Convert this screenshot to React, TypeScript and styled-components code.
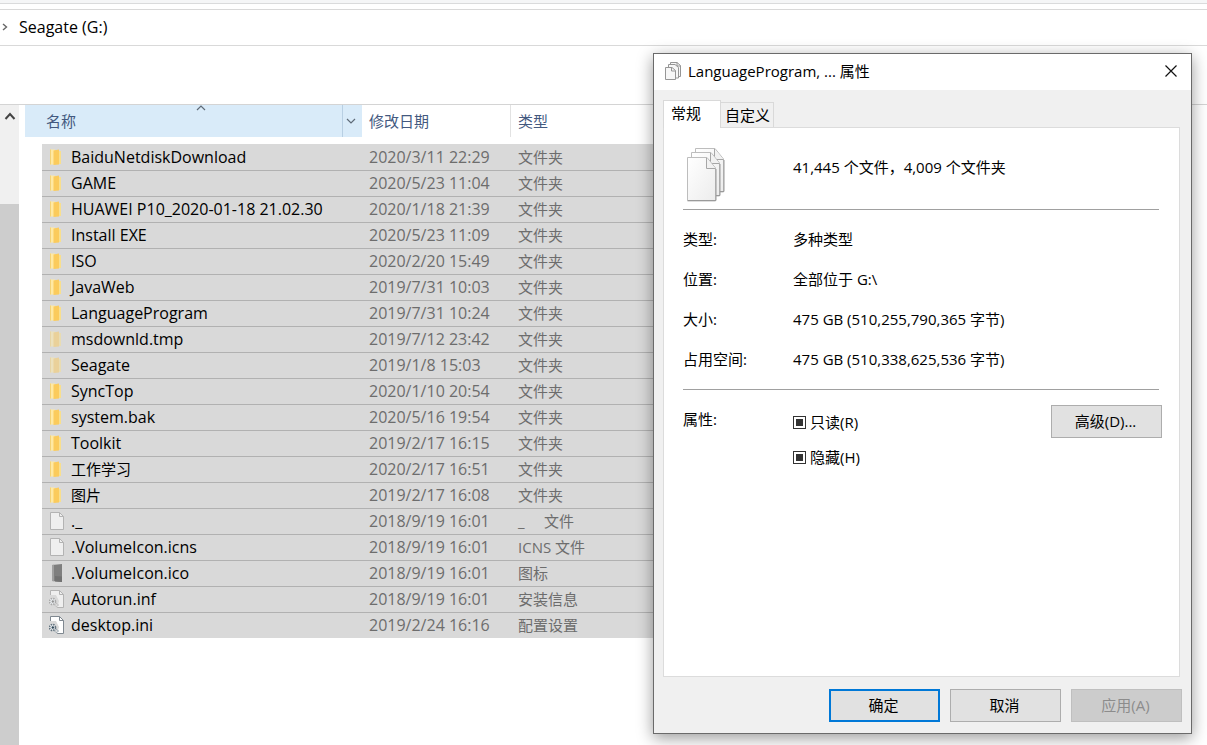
import React, { useEffect, useRef } from "react";
import styled, { createGlobalStyle, css } from "styled-components";

const GlobalStyle = createGlobalStyle`
  *, *::before, *::after { box-sizing: border-box; }
  body {
    margin: 0;
    background: #fff;
    color: #000;
    font: 15px/20px "Open Sans", "Noto Sans CJK SC", sans-serif;
  }
  button, input { font: inherit; color: inherit; }
  h1, dl, dd, p { margin: 0; font: inherit; }
`;

const Desktop = styled.div`
  position: relative;
  min-height: 100vh;
`;

const Explorer = styled.main`
  display: flex;
  flex-direction: column;
  min-height: 100vh;
`;

const RibbonEdge = styled.div`
  height: 4px;
  background: #f5f6f7;
  border-bottom: 1px solid #dadbdc;
`;

const AddressBar = styled.nav`
  display: flex;
  align-items: center;
  gap: 11px;
  height: 37px;
  margin-top: 5px;
  padding: 0 0 2px 2px;
  border-top: 1px solid #d9d9d9;
  border-bottom: 1px solid #d9d9d9;
`;

const CrumbLink = styled.a`
  color: inherit;
  font-size: 16px;
  text-decoration: none;
`;

const Content = styled.div`
  flex: 1;
  display: flex;
  margin-top: 58px;
  border-top: 1px solid #d4d4d4;
`;

const ScrollBar = styled.div`
  display: flex;
  flex-direction: column;
  flex: none;
  width: 19px;
  margin-right: 6px;
  background: #f0f0f0;
`;

const ScrollUp = styled.button`
  display: flex;
  align-items: center;
  justify-content: center;
  height: 22px;
  margin-bottom: 77px;
  padding: 0;
  border: 0;
  background: none;
`;

const ScrollThumb = styled.div`
  flex: 1;
  background: #cdcdcd;
`;

const FileTable = styled.table`
  flex: 1;
  align-self: flex-start;
  margin-right: 60px;
  table-layout: fixed;
  border-collapse: separate;
  border-spacing: 0;
  tbody::before {
    content: "";
    display: block;
    height: 7px;
  }
`;

const Col = styled.col<{ $width?: number }>`
  ${(p) => p.$width && css`width: ${p.$width}px;`}
`;

const HeadCell = styled.th<{ $sorted?: boolean }>`
  position: relative;
  height: 32px;
  padding: 0 0 0 7px;
  text-align: left;
  font-weight: 400;
  color: #43597f;
  ${(p) =>
    p.$sorted &&
    css`
      padding-left: 21px;
      background: #d9ebf9;
    `}
  & + & + & {
    border-left: 1px solid #e2e2e2;
  }
`;

const SortMark = styled.span`
  position: absolute;
  top: 0;
  left: 171px;
  display: flex;
`;

const HeadRow = styled.div`
  display: flex;
  align-items: center;
  justify-content: space-between;
  height: 32px;
`;

const FilterButton = styled.button`
  display: flex;
  align-items: center;
  justify-content: center;
  width: 20px;
  height: 32px;
  padding: 0 3px 0 0;
  border: 0;
  border-left: 1px solid #b8cfe3;
  background: none;
`;

const FileRow = styled.tr`
  td {
    height: 26px;
    padding: 0 0 2px 8px;
    border-top: 1px solid #b1b1b1;
    background: #d9d9d9;
    color: #6d6d6d;
    white-space: pre;
  }
  &:first-child td {
    border-color: #d9d9d9;
  }
  td:first-child {
    background: none;
    border-color: transparent;
    padding: 0;
  }
  td:nth-child(2) {
    padding-left: 7px;
    color: #000;
  }
  td:nth-child(3) {
    padding-left: 7px;
    font-size: 16px;
  }
`;

const FileName = styled.span<{ $latin: boolean }>`
  display: flex;
  align-items: center;
  gap: 6px;
  ${(p) => p.$latin && css`font-size: 16px;`}
  svg { flex: none; }
`;

const Dialog = styled.section`
  position: absolute;
  top: 53px;
  right: 15px;
  width: 539px;
  border: 1px solid #6a6a6a;
  background: #f0f0f0;
  box-shadow: 0 4px 15px rgba(0, 0, 0, 0.4);
`;

const TitleBar = styled.header`
  display: flex;
  align-items: center;
  gap: 6px;
  height: 36px;
  padding: 0 10px 2px;
  background: #fff;
`;

const Title = styled.h1`
  flex: 1;
`;

const CloseButton = styled.button`
  display: flex;
  align-items: center;
  justify-content: center;
  width: 20px;
  height: 20px;
  padding: 0;
  border: 0;
  background: none;
`;

const TabList = styled.div`
  display: flex;
  align-items: flex-end;
  padding: 10px 9px 0;
`;

const Tab = styled.button<{ $active?: boolean }>`
  height: 25px;
  padding: 0 3px 0 4px;
  border: 1px solid #d9d9d9;
  border-width: 1px 1px 0 0;
  background: #f0f0f0;
  ${(p) =>
    p.$active &&
    css`
      position: relative;
      height: 28px;
      padding: 0 19px 4px 7px;
      margin-bottom: -1px;
      border-left-width: 1px;
      background: #fff;
    `}
`;

const Panel = styled.div`
  min-height: 550px;
  margin: 0 11px 0 9px;
  padding: 0 17px 0 19px;
  border: 1px solid #dcdcdc;
  background: #fff;
`;

const Summary = styled.div`
  display: grid;
  grid-template-columns: 110px 1fr;
  align-items: center;
  height: 81px;
  padding-bottom: 4px;
`;

const SummaryIcon = styled.span`
  display: flex;
  padding: 17px 0 0 4px;
`;

const Rule = styled.hr`
  height: 1px;
  margin: 0 3px 0 0;
  border: 0;
  background: #a0a0a0;
`;

const Details = styled.dl`
  display: grid;
  grid-template-columns: 110px 1fr;
  grid-auto-rows: 40px;
  align-items: center;
  padding: 9px 0 10px;
`;

const Attributes = styled.div`
  display: grid;
  grid-template-columns: 110px 1fr auto;
  align-items: start;
  padding-top: 15px;
`;

const AttributeLabel = styled.p`
  padding-top: 4px;
`;

const CheckList = styled.div`
  display: flex;
  flex-direction: column;
  gap: 15px;
  padding-top: 7px;
`;

const CheckLabel = styled.label`
  display: flex;
  align-items: center;
  gap: 4px;
`;

const CheckInput = styled.input`
  appearance: none;
  width: 13px;
  height: 13px;
  margin: 0;
  padding: 2px;
  border: 1px solid #333;
  background: #fff;
  &:indeterminate {
    background: #333 content-box;
  }
`;

const PushButton = styled.button<{ $primary?: boolean }>`
  width: 111px;
  height: 33px;
  padding: 0 2px 2px 0;
  border: 1px solid #adadad;
  background: #e1e1e1;
  ${(p) => p.$primary && css`border: 2px solid #0078d7;`}
  &:disabled {
    border-color: #bfbfbf;
    background: #cccccc;
    color: #8c8c8c;
  }
`;

const Footer = styled.footer`
  display: flex;
  justify-content: flex-end;
  gap: 10px;
  padding: 12px 9px 11px;
`;

type IconKind = "folder" | "hidden" | "file" | "drive" | "inf" | "ini";

function FolderIcon({ faded }: { faded?: boolean }) {
  return (
    <svg width="16" height="18" viewBox="0 0 16 18" opacity={faded ? 0.5 : 1} aria-hidden="true">
      <path d="M1 1.500h5v15H1z" fill="#ffe9a3" />
      <path d="M10 3h2v13h-2z" fill="#f8df8e" />
      <path d="M4.500 2.500L10 1.500v15l-5.500.500z" fill="#fbcb5c" />
      <path d="M1.500 1.500v15" stroke="#f3d277" strokeWidth="1" />
    </svg>
  );
}

function PageIcon({ variant }: { variant: "file" | "inf" | "ini" }) {
  const strong = variant === "ini";
  const line = strong ? "#7f8890" : "#b3b3b3";
  return (
    <svg width="16" height="18" viewBox="0 0 16 18" aria-hidden="true">
      <path d="M1.500.500h9l4 4v13h-13z" fill={strong ? "#fff" : "#efefef"} stroke={line} />
      <path d="M10.500.500v4h4" fill="none" stroke={line} />
      {variant !== "file" && (
        <g>
          <path d="M0 5h7l3 6-2 7H0z" fill="#d9d9d9" />
          <circle cx="3.500" cy="11.500" r="3" fill="#edf1f4" stroke={strong ? "#63737f" : "#a9a9a9"} strokeWidth="1.600" strokeDasharray="1.500 .9" />
          <circle cx="3.800" cy="11.500" r="1.200" fill={strong ? "#2d4455" : "#909090"} />
          <circle cx="7.500" cy="15" r="1.600" fill="none" stroke={strong ? "#8093a0" : "#b5b5b5"} strokeDasharray="1 .6" />
        </g>
      )}
    </svg>
  );
}

function DriveIcon() {
  return (
    <svg width="16" height="18" viewBox="0 0 16 18" aria-hidden="true">
      <path d="M3 1l10-1v18l-10-1z" fill="#7f7f7f" />
      <path d="M3 1l2-.200v16.400L3 17z" fill="#a0a0a0" />
      <path d="M6 12l7 .500V18l-7-.600z" fill="#727272" />
    </svg>
  );
}

function FileIcon({ kind }: { kind: IconKind }) {
  if (kind === "folder") return <FolderIcon />;
  if (kind === "hidden") return <FolderIcon faded />;
  if (kind === "drive") return <DriveIcon />;
  return <PageIcon variant={kind} />;
}

function Chevron({ points, width, height, color = "#5f6b78", weight = 1.2 }: { points: string; width: number; height: number; color?: string; weight?: number }) {
  return (
    <svg width={width} height={height} viewBox={`0 0 ${width} ${height}`} aria-hidden="true">
      <polyline points={points} fill="none" stroke={color} strokeWidth={weight} />
    </svg>
  );
}

function StackPage({ x, y }: { x: number; y: number }) {
  return (
    <g transform={`translate(${x} ${y})`}>
      <path d="M.500.500H20L28.500 11v33H.500z" fill="url(#page)" stroke="#bdbdbd" />
      <path d="M1 43.500h28V12" fill="none" stroke="#9a9a9a" />
      <path d="M19.500 1v10.500h9" fill="#f1f1f1" stroke="#a6a6a6" />
    </g>
  );
}

function FileStackIcon() {
  return (
    <svg width="40" height="55" viewBox="0 0 40 55" aria-hidden="true">
      <defs>
        <linearGradient id="page" x1="0" y1="0" x2="1" y2="1">
          <stop offset="0" stopColor="#fff" />
          <stop offset="1" stopColor="#ececec" />
        </linearGradient>
      </defs>
      <StackPage x={8} y={0} />
      <StackPage x={4} y={4} />
      <StackPage x={0} y={9} />
    </svg>
  );
}

function SmallStackIcon() {
  return (
    <svg width="18" height="20" viewBox="0 0 18 20" aria-hidden="true">
      <g fill="#f7f7f7" stroke="#969696">
        <path d="M6.500 1.500h6.500l3.500 3v11h-10z" />
        <path d="M4.500 3.500h6.500l3.500 3v10.500h-10z" />
        <path d="M1.500 6.500h6.500l3.500 3v9h-10z" />
        <path d="M7.500 6.500v3.500h4M13 1.500v3.500h3.500" fill="none" />
      </g>
    </svg>
  );
}

const files: { icon: IconKind; name: string; date: string; type: string }[] = [
  { icon: "folder", name: "BaiduNetdiskDownload", date: "2020/3/11 22:29", type: "文件夹" },
  { icon: "folder", name: "GAME", date: "2020/5/23 11:04", type: "文件夹" },
  { icon: "folder", name: "HUAWEI P10_2020-01-18 21.02.30", date: "2020/1/18 21:39", type: "文件夹" },
  { icon: "folder", name: "Install EXE", date: "2020/5/23 11:09", type: "文件夹" },
  { icon: "folder", name: "ISO", date: "2020/2/20 15:49", type: "文件夹" },
  { icon: "folder", name: "JavaWeb", date: "2019/7/31 10:03", type: "文件夹" },
  { icon: "folder", name: "LanguageProgram", date: "2019/7/31 10:24", type: "文件夹" },
  { icon: "hidden", name: "msdownld.tmp", date: "2019/7/12 23:42", type: "文件夹" },
  { icon: "hidden", name: "Seagate", date: "2019/1/8 15:03", type: "文件夹" },
  { icon: "folder", name: "SyncTop", date: "2020/1/10 20:54", type: "文件夹" },
  { icon: "folder", name: "system.bak", date: "2020/5/16 19:54", type: "文件夹" },
  { icon: "folder", name: "Toolkit", date: "2019/2/17 16:15", type: "文件夹" },
  { icon: "folder", name: "工作学习", date: "2020/2/17 16:51", type: "文件夹" },
  { icon: "folder", name: "图片", date: "2019/2/17 16:08", type: "文件夹" },
  { icon: "file", name: "._", date: "2018/9/19 16:01", type: "_     文件" },
  { icon: "file", name: ".VolumeIcon.icns", date: "2018/9/19 16:01", type: "ICNS 文件" },
  { icon: "drive", name: ".VolumeIcon.ico", date: "2018/9/19 16:01", type: "图标" },
  { icon: "inf", name: "Autorun.inf", date: "2018/9/19 16:01", type: "安装信息" },
  { icon: "ini", name: "desktop.ini", date: "2019/2/24 16:16", type: "配置设置" },
];

const isLatin = (text: string) => text.charCodeAt(0) < 256;

const details = [
  ["类型:", "多种类型"],
  ["位置:", "全部位于 G:\\"],
  ["大小:", "475 GB (510,255,790,365 字节)"],
  ["占用空间:", "475 GB (510,338,625,536 字节)"],
];

function MixedCheck({ label }: { label: string }) {
  const ref = useRef<HTMLInputElement>(null);
  useEffect(() => {
    if (ref.current) ref.current.indeterminate = true;
  }, []);
  return (
    <CheckLabel>
      <CheckInput type="checkbox" ref={ref} />
      {label}
    </CheckLabel>
  );
}

function PropertiesDialog() {
  return (
    <Dialog role="dialog" aria-labelledby="dialog-title">
      <TitleBar>
        <SmallStackIcon />
        <Title id="dialog-title">LanguageProgram, ... 属性</Title>
        <CloseButton aria-label="关闭">
          <svg width="12" height="12" viewBox="0 0 12 12" aria-hidden="true">
            <path d="M.500.500l11 11M11.500.500l-11 11" stroke="#111" strokeWidth="1.200" />
          </svg>
        </CloseButton>
      </TitleBar>
      <TabList role="tablist">
        <Tab role="tab" aria-selected="true" $active>常规</Tab>
        <Tab role="tab" aria-selected="false">自定义</Tab>
      </TabList>
      <Panel role="tabpanel">
        <Summary>
          <SummaryIcon><FileStackIcon /></SummaryIcon>
          <p>41,445 个文件，4,009 个文件夹</p>
        </Summary>
        <Rule />
        <Details>
          {details.map(([term, value]) => (
            <React.Fragment key={term}>
              <dt>{term}</dt>
              <dd>{value}</dd>
            </React.Fragment>
          ))}
        </Details>
        <Rule />
        <Attributes>
          <AttributeLabel>属性:</AttributeLabel>
          <CheckList>
            <MixedCheck label="只读(R)" />
            <MixedCheck label="隐藏(H)" />
          </CheckList>
          <PushButton>高级(D)...</PushButton>
        </Attributes>
      </Panel>
      <Footer>
        <PushButton $primary>确定</PushButton>
        <PushButton>取消</PushButton>
        <PushButton disabled>应用(A)</PushButton>
      </Footer>
    </Dialog>
  );
}

export default function App() {
  return (
    <Desktop>
      <GlobalStyle />
      <Explorer>
        <RibbonEdge />
        <AddressBar>
          <Chevron width={6} height={8} points="1,1 4.5,4 1,7" color="#666" weight={1.4} />
          <CrumbLink href="#">Seagate (G:)</CrumbLink>
        </AddressBar>
        <Content>
          <ScrollBar>
            <ScrollUp aria-label="向上滚动">
              <Chevron width={12} height={8} points="1.5,7 6,2 10.5,7" color="#444" weight={2} />
            </ScrollUp>
            <ScrollThumb />
          </ScrollBar>
          <FileTable>
            <colgroup>
              <Col $width={17} />
              <Col $width={320} />
              <Col $width={148} />
              <Col />
            </colgroup>
            <thead>
              <tr>
                <HeadCell colSpan={2} $sorted aria-sort="ascending">
                  <SortMark>
                    <Chevron width={10} height={6} points="1,5 5,1 9,5" />
                  </SortMark>
                  <HeadRow>
                    名称
                    <FilterButton aria-label="筛选">
                      <Chevron width={10} height={6} points="1,1 5,5 9,1" />
                    </FilterButton>
                  </HeadRow>
                </HeadCell>
                <HeadCell>修改日期</HeadCell>
                <HeadCell>类型</HeadCell>
              </tr>
            </thead>
            <tbody>
              {files.map((file) => (
                <FileRow key={file.name}>
                  <td />
                  <td>
                    <FileName $latin={isLatin(file.name)}>
                      <FileIcon kind={file.icon} />
                      {file.name}
                    </FileName>
                  </td>
                  <td>{file.date}</td>
                  <td>{file.type}</td>
                </FileRow>
              ))}
            </tbody>
          </FileTable>
        </Content>
      </Explorer>
      <PropertiesDialog />
    </Desktop>
  );
}
